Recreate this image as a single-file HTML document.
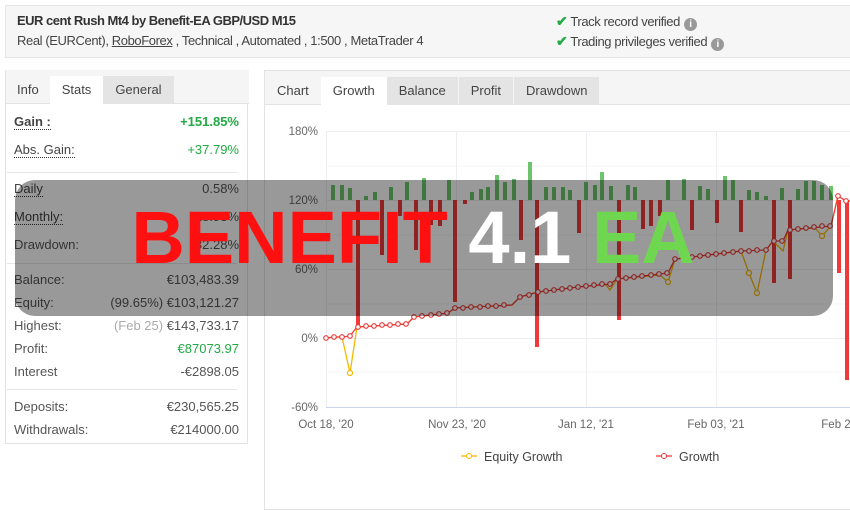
<!DOCTYPE html>
<html><head><meta charset="utf-8"><style>
*{margin:0;padding:0;box-sizing:border-box}
body{width:850px;height:500px;overflow:hidden;background:#fff;font-family:"Liberation Sans",sans-serif;color:#333;position:relative}
.hdr{position:absolute;left:5px;top:5px;width:850px;height:53px;background:#f6f6f6;border:1px solid #e6e6e6}
.t1{position:absolute;left:11px;top:7px;font-size:13px;font-weight:bold;letter-spacing:-0.5px}
.t2{position:absolute;left:11px;top:27px;font-size:13px;letter-spacing:-0.4px;color:#444}
.v{position:absolute;left:550px;font-size:13px;color:#444;letter-spacing:-0.4px}
.v b{color:#22aa44;font-size:14px;margin-right:3px}
.v i{display:inline-block;width:13px;height:13px;border-radius:50%;background:#999;color:#fff;font-size:10px;font-style:normal;text-align:center;line-height:13px;font-weight:bold;margin-left:4px;vertical-align:-1px}
.lp{position:absolute;left:5px;top:70px;width:243px;height:374px;border:1px solid #e3e3e3;border-top:none}
.tabs{position:absolute;height:28px;display:flex;font-size:13px}
.tabs div{padding:0 12px;line-height:28px;color:#444}
.tabs .g{background:#e4e4e4}
.tabs .w{background:#fff}
.row{position:absolute;left:8px;width:225px;font-size:13px;color:#555;display:flex;justify-content:space-between}
.row span.u{border-bottom:1px dotted #333;color:#444}
.gr{color:#22aa44}
.sep{position:absolute;left:7px;width:230px;height:1px;background:#e6e6e6}
.cp{position:absolute;left:264px;top:70px;width:590px;height:440px;border:1px solid #e3e3e3}
</style></head><body>
<div class="hdr">
<div class="t1">EUR cent Rush Mt4 by Benefit-EA GBP/USD M15</div>
<div class="t2">Real (EURCent), <u>RoboForex</u> , Technical , Automated , 1:500 , MetaTrader 4</div>
<div class="v" style="top:7px"><b>✔</b>Track record verified<i>i</i></div>
<div class="v" style="top:27px"><b>✔</b>Trading privileges verified<i>i</i></div>
</div>
<div class="lp">
<div style="position:absolute;left:0;top:0;width:243px;height:34px;background:#f5f5f5;border-bottom:1px solid #e3e3e3"></div>
<div class="tabs" style="left:0;top:6px"><div style="padding:0 11px">Info</div><div class="w" style="height:29px">Stats</div><div class="g">General</div></div>
</div>
<div class="row" style="top:114px;left:14px"><span class="u" style="font-weight:bold">Gain :</span><span class="gr" style="font-weight:bold">+151.85%</span></div>
<div class="row" style="top:142px;left:14px"><span class="u">Abs. Gain:</span><span class="gr">+37.79%</span></div>
<div class="sep" style="top:172px"></div>
<div class="row" style="top:181px;left:14px"><span class="u">Daily</span><span>0.58%</span></div>
<div class="row" style="top:209px;left:14px"><span class="u">Monthly:</span><span>18.93%</span></div>
<div class="row" style="top:237px;left:14px"><span>Drawdown:</span><span>32.28%</span></div>
<div class="sep" style="top:263px"></div>
<div class="row" style="top:272px;left:14px"><span>Balance:</span><span>€103,483.39</span></div>
<div class="row" style="top:295px;left:14px"><span>Equity:</span><span>(99.65%) €103,121.27</span></div>
<div class="row" style="top:318px;left:14px"><span>Highest:</span><span><span style="color:#aaa">(Feb 25)</span> €143,733.17</span></div>
<div class="row" style="top:341px;left:14px"><span>Profit:</span><span class="gr">€87073.97</span></div>
<div class="row" style="top:364px;left:14px"><span>Interest</span><span>-€2898.05</span></div>
<div class="sep" style="top:389px"></div>
<div class="row" style="top:399px;left:14px"><span>Deposits:</span><span>€230,565.25</span></div>
<div class="row" style="top:422px;left:14px"><span>Withdrawals:</span><span>€214000.00</span></div>

<div class="cp">
<div style="position:absolute;left:0;top:0;width:590px;height:34px;background:#f5f5f5;border-bottom:1px solid #e3e3e3"></div>
<div class="tabs" style="left:0;top:6px"><div>Chart</div><div class="w" style="height:29px">Growth</div><div class="g" style="margin-right:1px">Balance</div><div class="g" style="margin-right:1px">Profit</div><div class="g">Drawdown</div></div>
</div>
<svg style="position:absolute;left:0;top:0" width="850" height="500" font-family="Liberation Sans,sans-serif">
<g stroke="#eceef2" stroke-width="1">
<line x1="326" y1="131.5" x2="850" y2="131.5"/><line x1="326" y1="200.5" x2="850" y2="200.5"/><line x1="326" y1="269.5" x2="850" y2="269.5"/><line x1="326" y1="338.5" x2="850" y2="338.5"/>
<line x1="326" y1="166" x2="850" y2="166" stroke="#f5f5f7"/><line x1="326" y1="235" x2="850" y2="235" stroke="#f5f5f7"/><line x1="326" y1="304" x2="850" y2="304" stroke="#f5f5f7"/><line x1="326" y1="372" x2="850" y2="372" stroke="#f5f5f7"/>
<line x1="326.5" y1="131" x2="326.5" y2="407"/><line x1="456.5" y1="131" x2="456.5" y2="407"/><line x1="586.5" y1="131" x2="586.5" y2="407"/><line x1="716.5" y1="131" x2="716.5" y2="407"/>
</g>
<line x1="326" y1="407.5" x2="850" y2="407.5" stroke="#ccd6eb"/>
<g font-size="11.5" fill="#666" text-anchor="end">
<text x="318" y="135">180%</text><text x="318" y="204">120%</text><text x="318" y="273">60%</text><text x="318" y="342">0%</text><text x="318" y="411">-60%</text></g>
<g font-size="11.5" fill="#666" text-anchor="middle">
<text x="326" y="428">Oct 18, '20</text><text x="457" y="428">Nov 23, '20</text><text x="586" y="428">Jan 12, '21</text><text x="716" y="428">Feb 03, '21</text><text x="836" y="428">Feb 2</text></g>
<g fill="#6cc56c">
<rect x="331" y="185" width="4" height="15"/><rect x="340" y="185" width="4" height="15"/><rect x="348" y="188" width="4" height="12"/><rect x="364" y="196" width="4" height="4"/><rect x="373" y="192" width="4" height="8"/><rect x="389" y="187" width="4" height="13"/><rect x="405" y="182" width="4" height="18"/><rect x="422" y="178" width="4" height="22"/><rect x="447" y="180" width="4" height="20"/><rect x="470" y="192" width="4" height="8"/><rect x="479" y="189" width="4" height="11"/><rect x="486" y="187" width="4" height="13"/><rect x="495" y="175" width="4" height="25"/><rect x="503" y="182" width="4" height="18"/><rect x="512" y="179" width="4" height="21"/><rect x="528" y="162" width="4" height="38"/><rect x="544" y="187" width="4" height="13"/><rect x="552" y="187" width="4" height="13"/><rect x="561" y="187" width="4" height="13"/><rect x="568" y="190" width="4" height="10"/><rect x="584" y="182" width="4" height="18"/><rect x="593" y="185" width="4" height="15"/><rect x="600" y="172" width="4" height="28"/><rect x="609" y="186" width="4" height="14"/><rect x="626" y="185" width="4" height="15"/><rect x="633" y="187" width="4" height="13"/><rect x="666" y="180" width="4" height="20"/><rect x="682" y="179" width="4" height="21"/><rect x="698" y="186" width="4" height="14"/><rect x="706" y="189" width="4" height="11"/><rect x="723" y="176" width="4" height="24"/><rect x="731" y="180" width="4" height="20"/><rect x="747" y="190" width="4" height="10"/><rect x="755" y="192" width="4" height="8"/><rect x="764" y="196" width="4" height="4"/><rect x="780" y="188" width="4" height="12"/><rect x="796" y="189" width="4" height="11"/><rect x="804" y="181" width="4" height="19"/><rect x="812" y="181" width="4" height="19"/><rect x="820" y="185" width="4" height="15"/><rect x="829" y="186" width="4" height="14"/>
</g>
<g fill="#f03a3a">
<rect x="356" y="200" width="4" height="127"/><rect x="380" y="200" width="4" height="55"/><rect x="398" y="200" width="4" height="16"/><rect x="414" y="200" width="4" height="50"/><rect x="429" y="200" width="4" height="25"/><rect x="438" y="200" width="4" height="26"/><rect x="453" y="200" width="4" height="102"/><rect x="463" y="200" width="4" height="4"/><rect x="519" y="200" width="4" height="40"/><rect x="535" y="200" width="4" height="147"/><rect x="577" y="200" width="4" height="33"/><rect x="617" y="200" width="4" height="120"/><rect x="641" y="200" width="4" height="29"/><rect x="649" y="200" width="4" height="26"/><rect x="658" y="200" width="4" height="16"/><rect x="690" y="200" width="4" height="30"/><rect x="715" y="200" width="4" height="23"/><rect x="739" y="200" width="4" height="32"/><rect x="772" y="200" width="4" height="83"/><rect x="788" y="200" width="4" height="79"/><rect x="837" y="200" width="4" height="73"/><rect x="845" y="200" width="4" height="180"/>
</g>
<g fill="none" stroke-width="1.3">
<polyline stroke="#f5b800" points="326,338 334,337 342,337 350,373 357,327 407,324 414,317 440,314 448,313 455,308 512,305 520,297 538,292 578,287 605,284 610,290 617,279 660,275 668,282 675,259 685,258 700,256 741,251 749,273 757,293 766,250 773,241 783,251 788,230 815,228 822,236 831,226 838,196 846,201 850,201"/>
<polyline stroke="#ee3b3b" points="326,338 334,337 342,337 350,336 357,327 407,324 414,317 440,314 448,313 455,308 512,305 520,297 538,292 578,287 610,284 617,279 668,273 675,259 685,258 700,256 741,251 766,250 773,241 783,241 788,230 831,226 838,196 846,201 850,201"/>
</g>
<g fill="#fff" stroke="#ee3b3b" stroke-width="1.2">
<circle cx="326" cy="338" r="2.3"/><circle cx="334" cy="337" r="2.3"/><circle cx="342" cy="337" r="2.3"/><circle cx="350" cy="336" r="2.3"/><circle cx="358" cy="327" r="2.3"/><circle cx="366" cy="326" r="2.3"/><circle cx="374" cy="326" r="2.3"/><circle cx="382" cy="325" r="2.3"/><circle cx="390" cy="325" r="2.3"/><circle cx="398" cy="324" r="2.3"/><circle cx="406" cy="324" r="2.3"/><circle cx="414" cy="317" r="2.3"/><circle cx="422" cy="316" r="2.3"/><circle cx="431" cy="315" r="2.3"/><circle cx="439" cy="314" r="2.3"/><circle cx="447" cy="313" r="2.3"/><circle cx="455" cy="308" r="2.3"/><circle cx="463" cy="308" r="2.3"/><circle cx="471" cy="307" r="2.3"/><circle cx="480" cy="307" r="2.3"/><circle cx="488" cy="306" r="2.3"/><circle cx="496" cy="306" r="2.3"/><circle cx="504" cy="305" r="2.3"/><circle cx="520" cy="297" r="2.3"/><circle cx="529" cy="295" r="2.3"/><circle cx="538" cy="292" r="2.3"/><circle cx="546" cy="291" r="2.3"/><circle cx="554" cy="290" r="2.3"/><circle cx="562" cy="289" r="2.3"/><circle cx="570" cy="288" r="2.3"/><circle cx="578" cy="287" r="2.3"/><circle cx="586" cy="286" r="2.3"/><circle cx="594" cy="285" r="2.3"/><circle cx="602" cy="284" r="2.3"/><circle cx="610" cy="284" r="2.3"/><circle cx="618" cy="279" r="2.3"/><circle cx="626" cy="278" r="2.3"/><circle cx="634" cy="277" r="2.3"/><circle cx="642" cy="276" r="2.3"/><circle cx="651" cy="275" r="2.3"/><circle cx="659" cy="274" r="2.3"/><circle cx="667" cy="273" r="2.3"/><circle cx="675" cy="259" r="2.3"/><circle cx="684" cy="258" r="2.3"/><circle cx="692" cy="257" r="2.3"/><circle cx="700" cy="256" r="2.3"/><circle cx="708" cy="255" r="2.3"/><circle cx="716" cy="254" r="2.3"/><circle cx="724" cy="253" r="2.3"/><circle cx="733" cy="252" r="2.3"/><circle cx="741" cy="251" r="2.3"/><circle cx="749" cy="251" r="2.3"/><circle cx="757" cy="250" r="2.3"/><circle cx="766" cy="250" r="2.3"/><circle cx="774" cy="241" r="2.3"/><circle cx="782" cy="241" r="2.3"/><circle cx="790" cy="230" r="2.3"/><circle cx="798" cy="229" r="2.3"/><circle cx="806" cy="228" r="2.3"/><circle cx="814" cy="227" r="2.3"/><circle cx="822" cy="226" r="2.3"/><circle cx="830" cy="226" r="2.3"/><circle cx="838" cy="196" r="2.3"/><circle cx="846" cy="201" r="2.3"/>
</g>
<g fill="#fff" stroke="#f5b800" stroke-width="1.2"><circle cx="350" cy="373" r="2.5"/><circle cx="757" cy="293" r="2.5"/><circle cx="749" cy="273" r="2.5"/><circle cx="668" cy="282" r="2.5"/><circle cx="822" cy="236" r="2.5"/></g>
<g font-size="12.5" fill="#444">
<line x1="461" y1="456" x2="477" y2="456" stroke="#f5b800" stroke-width="1.3"/><circle cx="469" cy="456" r="2.5" fill="#fff" stroke="#f5b800"/><text x="484" y="461">Equity Growth</text>
<line x1="656" y1="456" x2="672" y2="456" stroke="#ee3b3b" stroke-width="1.3"/><circle cx="664" cy="456" r="2.5" fill="#fff" stroke="#ee3b3b"/><text x="679" y="461">Growth</text>
</g>
<rect x="15" y="180" width="818" height="136" rx="20" fill="rgba(0,0,0,0.4)"/>
<text x="413" y="263" text-anchor="middle" font-size="74" font-weight="bold"><tspan fill="#ff1010">BENEFIT</tspan><tspan fill="#fff"> 4.1 </tspan><tspan fill="#6fd64f">EA</tspan></text>
</svg>
</body></html>
